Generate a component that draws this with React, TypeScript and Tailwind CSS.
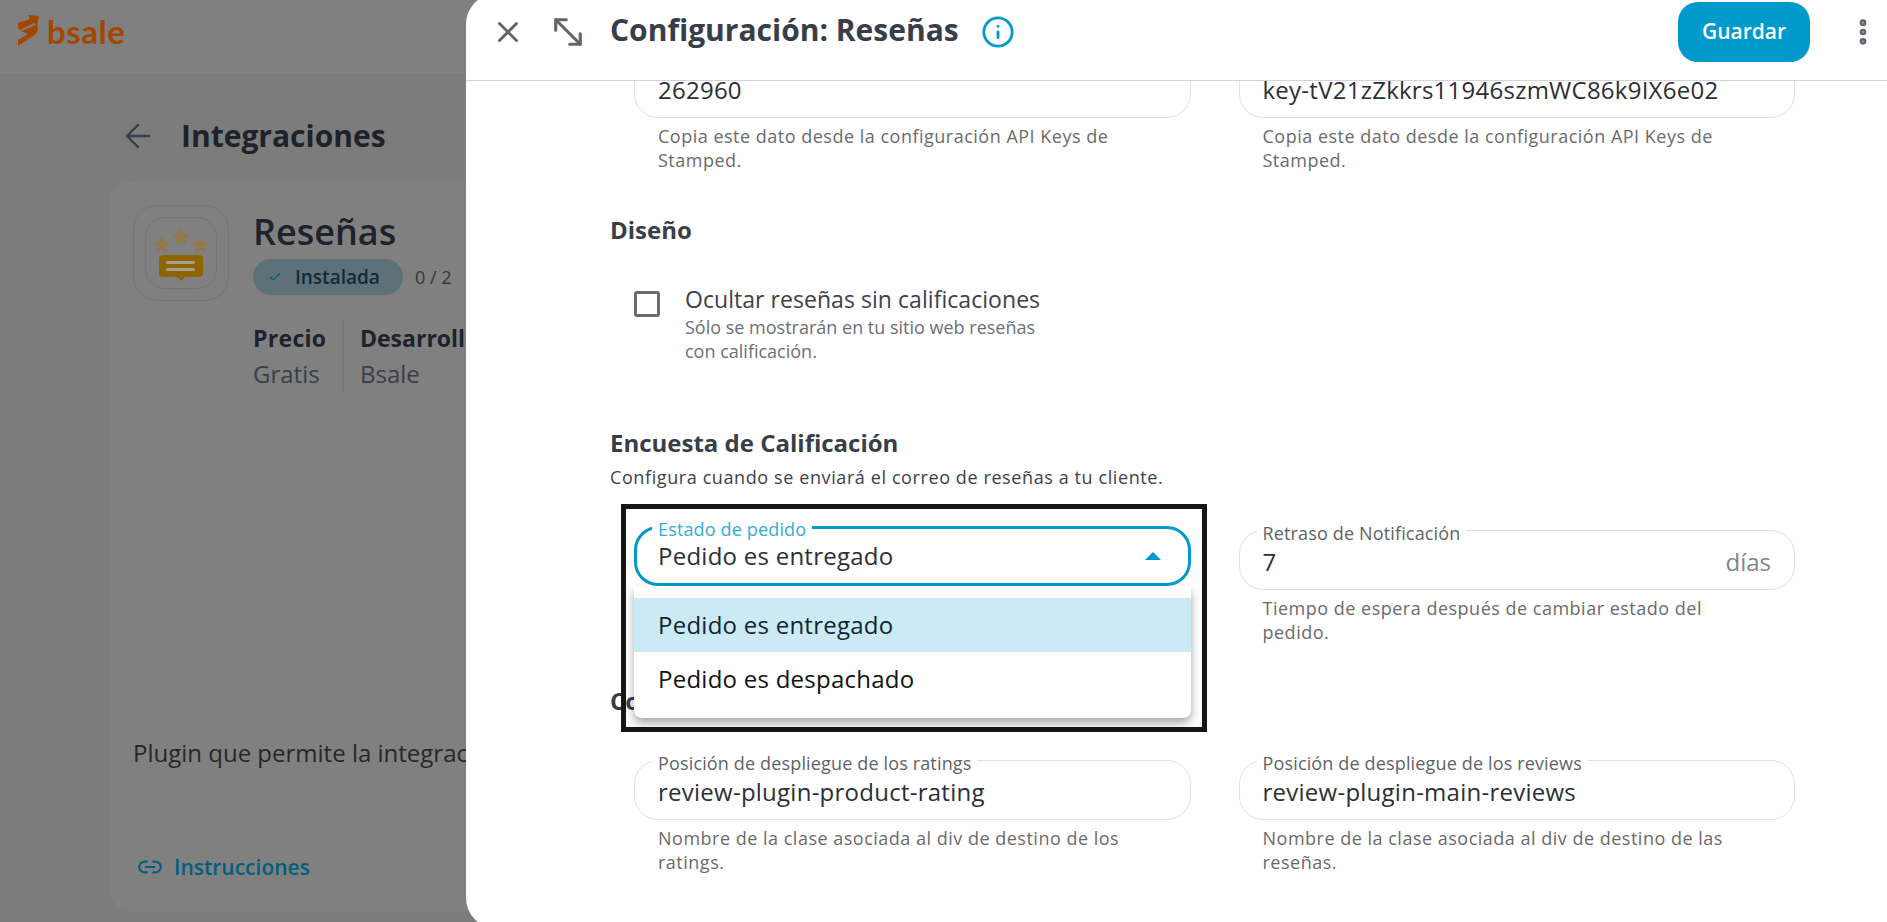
import { X, MoveDiagonal2, Info, ArrowLeft, Check, Link2, EllipsisVertical } from "lucide-react";

function Field({ label, value, helper, suffix }: { label: string; value: string; helper: string; suffix?: string }) {
  return (
    <div>
      <div className="relative flex h-[60px] items-center rounded-[24px] border border-[#e2e2e2] bg-white px-[23px] pt-[4px]">
        <span className="absolute -top-[7px] left-[17px] bg-white px-[6px] text-[18px] leading-[18px] tracking-[0.15px] text-[#5f6368]">{label}</span>
        <span className="flex-1 text-[24px] leading-[30px] tracking-[0.25px] text-[#2b2f36]">{value}</span>
        {suffix && <span className="text-[24px] leading-[30px] text-[#80868b]">{suffix}</span>}
      </div>
      <p className="mt-[6px] px-6 text-[18px] leading-[24px] tracking-[0.5px] text-[#6b6b6b]">{helper}</p>
    </div>
  );
}

function Heading({ children }: { children: string }) {
  return <h2 className="text-[24px] font-bold leading-[30px] text-[#373e4a]">{children}</h2>;
}

function SelectField() {
  return (
    <div className="relative -mt-1 h-[60px] rounded-[24px] border-[3px] border-[#0099cc] bg-white">
      <span className="absolute -top-[9px] left-[15px] bg-white px-[6px] text-[18px] leading-[18px] tracking-[0.15px] text-[#33add6]">Estado de pedido</span>
      <div className="flex h-full items-center justify-between pl-[21px] pr-[27px]">
        <span className="text-[24px] leading-[30px] tracking-[0.25px] text-[#2b2f36]">Pedido es entregado</span>
        <svg width="16" height="8" viewBox="0 0 16 8"><path d="M8 0 L16 8 L0 8 Z" fill="#0099cc" /></svg>
      </div>
      <div className="absolute -left-[3px] -right-[3px] top-[57px] z-10 rounded-b-[8px] bg-white py-[12px] shadow-[0_5px_10px_rgba(0,0,0,0.35)]">
        <div className="flex h-[54px] items-center bg-[#cceaf5] px-6 text-[24px] tracking-[0.25px] text-[#10262e]">Pedido es entregado</div>
        <div className="flex h-[54px] items-center px-6 text-[24px] tracking-[0.25px] text-[#111111]">Pedido es despachado</div>
      </div>
      <div className="pointer-events-none absolute -left-[16px] -right-[19px] -top-[25px] z-20 h-[228px] border-[5px] border-[#161616]" />
    </div>
  );
}

export default function App() {
  return (
    <div className="relative h-[922px] w-[1887px] overflow-hidden bg-[#7c7c7c] font-['Open_Sans',sans-serif]">
      <header className="flex h-[75px] items-center border-b border-[#787878] bg-[#808080] pb-[12px] pl-[18px]">
        <svg width="22" height="32" viewBox="0 0 22 32">
          <path d="M0 8 L12 4 L10 0 L21 1 L19 11 L16 8 L2 15 C0 15 0 12 0 8 Z" fill="#a34700" />
          <path d="M3 16 L18 10 C21 12 20 17 18 19 L0 31 L0 25 L10 19 Z" fill="#a34700" />
        </svg>
        <span className="ml-[7px] font-['Lato',sans-serif] text-[33px] font-bold leading-none tracking-[0.5px] text-[#a34700]">bsale</span>
      </header>
      <main className="pl-[109px]">
        <div className="flex h-[106px] items-center gap-[24px] pl-[10px] pt-[16px]">
          <ArrowLeft size={38} strokeWidth={1.5} className="text-[#3a3e47]" />
          <h1 className="text-[30px] font-bold leading-[36px] text-[#1e222b]">Integraciones</h1>
        </div>
        <section className="h-[731px] w-[600px] rounded-[24px] bg-[#808080] pl-[24px] pt-[24px]">
          <div className="flex gap-[24px]">
            <div className="flex h-[96px] w-[96px] items-center justify-center rounded-[24px] border border-[#767676]">
              <div className="flex h-[72px] w-[72px] flex-col items-center justify-center rounded-[20px] border border-[#767676]">
                <svg width="58" height="56" viewBox="0 0 58 56">
                  <path d="M10 11 l2.700 5.500 6 .9 -4.400 4.200 1 6 -5.300-2.800 -5.300 2.800 1-6 -4.400-4.200 6-.9 Z" fill="#91794a" />
                  <path d="M29 3 l2.700 5.500 6 .9 -4.400 4.200 1 6 -5.300-2.800 -5.300 2.800 1-6 -4.400-4.200 6-.9 Z" fill="#91794a" />
                  <path d="M48 11 l2.700 5.500 6 .9 -4.400 4.200 1 6 -5.300-2.800 -5.300 2.800 1-6 -4.400-4.200 6-.9 Z" fill="#91794a" />
                  <path d="M11 30 h36 a4 4 0 0 1 4 4 v14 a4 4 0 0 1 -4 4 h-14 l-4 4 -4-4 h-14 a4 4 0 0 1 -4-4 v-14 a4 4 0 0 1 4-4 Z" fill="#8f6500" />
                  <rect x="14" y="36" width="29" height="3" rx="1.500" fill="#a8a08a" />
                  <rect x="14" y="43" width="29" height="3" rx="1.500" fill="#a8a08a" />
                </svg>
              </div>
            </div>
            <div>
              <div className="mt-[3px] text-[36px] font-semibold leading-[48px] text-[#1e222b]">Reseñas</div>
              <div className="mt-[3px] flex items-center gap-[12px]">
                <span className="flex h-[36px] w-[150px] items-center gap-[13px] rounded-full bg-[#5f7178] pl-[15px] text-[19px] font-semibold text-[#0b2c3b]">
                  <Check size={14} strokeWidth={2} className="text-[#005f7b]" />Instalada
                </span>
                <span className="text-[18px] text-[#33373f]">0 / 2</span>
              </div>
            </div>
          </div>
          <div className="ml-[120px] mt-[19px] flex">
            <div className="h-[72px] w-[91px] border-r-2 border-[#767676]">
              <div className="text-[23px] font-bold leading-[36px] tracking-[0.3px] text-[#1e222b]">Precio</div>
              <div className="text-[24px] leading-[36px] text-[#3a3e47]">Gratis</div>
            </div>
            <div className="ml-[16px] w-[180px]">
              <div className="text-[23px] font-bold leading-[36px] text-[#1e222b]">Desarrollador</div>
              <div className="text-[24px] leading-[36px] text-[#3a3e47]">Bsale</div>
            </div>
          </div>
          <p className="mt-[346px] whitespace-nowrap text-[24px] leading-[30px] text-[#25272c]">Plugin que permite la integración de reseñas</p>
          <div className="mt-[84px] flex items-center gap-[11px] pl-[4px]">
            <Link2 size={26} strokeWidth={2} className="text-[#005f7b]" />
            <span className="text-[21px] font-semibold leading-[30px] text-[#005f7b]">Instrucciones</span>
          </div>
        </section>
      </main>

      <aside className="absolute inset-y-[-6px] left-[466px] right-0 flex flex-col rounded-l-[30px] bg-white pt-[6px]">
        <div className="flex h-[81px] shrink-0 items-center border-b border-[#d6d0dc] pb-[16px] pl-[25px] pr-[8px]">
          <X size={34} strokeWidth={2} className="text-[#60646c]" />
          <MoveDiagonal2 size={42} strokeWidth={1.8} className="ml-[22px] text-[#60646c]" />
          <h1 className="-mt-[4px] ml-[21px] text-[30px] font-bold leading-[38px] text-[#373e4a]">Configuración: Reseñas</h1>
          <Info size={34} strokeWidth={2} className="ml-[22px] text-[#0099cc]" />
          <button className="ml-auto h-[60px] w-[132px] rounded-[20px] bg-[#0099cc] text-[21px] font-semibold text-white">Guardar</button>
          <EllipsisVertical size={32} strokeWidth={3} className="ml-[37px] text-[#60646c]" />
        </div>
        <div className="flex-1 overflow-hidden pl-[144px] pr-[92px]">
          <div className="-mt-[23px] ml-[24px] grid grid-cols-2 gap-x-[48px]">
            <Field label="Public Key" value="262960" helper="Copia este dato desde la configuración API Keys de Stamped." />
            <Field label="Private Key" value="key-tV21zZkkrs11946szmWC86k9IX6e02" helper="Copia este dato desde la configuración API Keys de Stamped." />
          </div>
          <div className="mt-[43px]"><Heading>Diseño</Heading></div>
          <div className="ml-[24px] mt-[40px] flex">
            <span className="mt-[6px] h-[26px] w-[26px] shrink-0 rounded-[3px] border-[3px] border-[#6b6b6b]" />
            <div className="ml-[25px]">
              <div className="text-[23px] leading-[28px] tracking-[0.05px] text-[#3c414a]">Ocultar reseñas sin calificaciones</div>
              <div className="mt-[2px] w-[370px] text-[18px] leading-[24px] text-[#6b7078]">Sólo se mostrarán en tu sitio web reseñas con calificación.</div>
            </div>
          </div>
          <div className="mt-[65px]"><Heading>Encuesta de Calificación</Heading></div>
          <p className="mt-[7px] text-[18px] leading-[24px] tracking-[0.6px] text-[#3c414a]">Configura cuando se enviará el correo de reseñas a tu cliente.</p>
          <div className="ml-[24px] mt-[41px] grid grid-cols-2 gap-x-[48px]">
            <SelectField />
            <Field label="Retraso de Notificación" value="7" suffix="días" helper="Tiempo de espera después de cambiar estado del pedido." />
          </div>
          <div className="mt-[42px]"><Heading>Configuración</Heading></div>
          <div className="ml-[24px] mt-[44px] grid grid-cols-2 gap-x-[48px]">
            <Field label="Posición de despliegue de los ratings" value="review-plugin-product-rating" helper="Nombre de la clase asociada al div de destino de los ratings." />
            <Field label="Posición de despliegue de los reviews" value="review-plugin-main-reviews" helper="Nombre de la clase asociada al div de destino de las reseñas." />
          </div>
        </div>
      </aside>
    </div>
  );
}
